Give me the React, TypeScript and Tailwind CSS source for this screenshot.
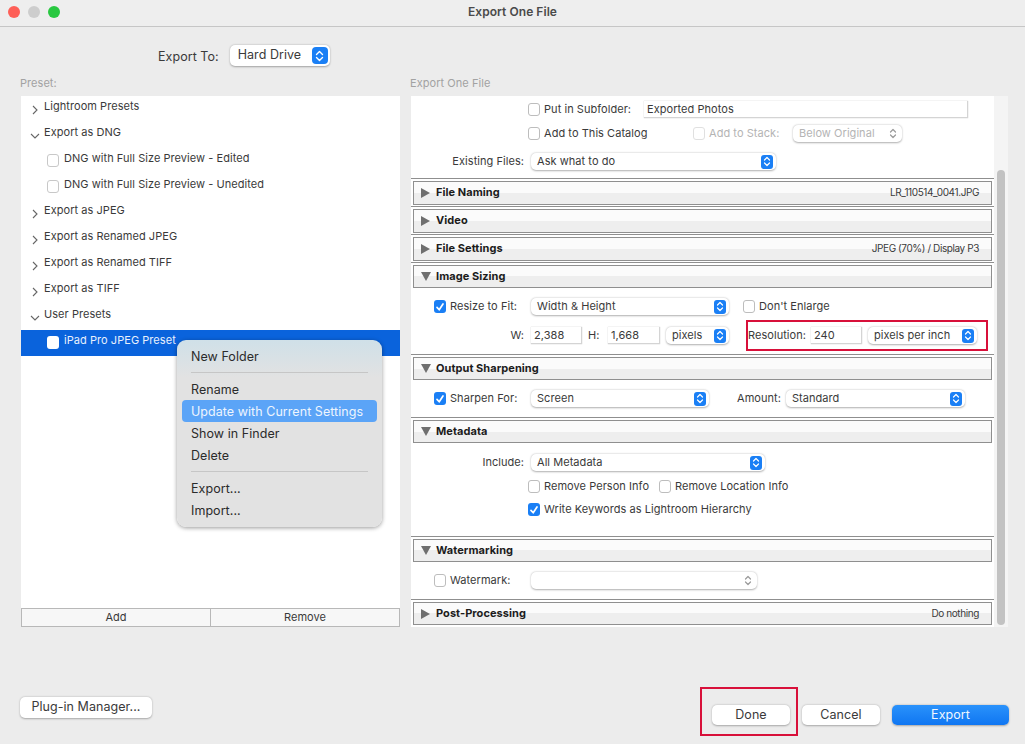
import type { ReactNode } from 'react'

const font = { fontFamily: 'Inter, "Noto Sans", sans-serif' }

function Stepper({ muted }: { muted?: boolean }) {
  return (
    <span className={muted ? 'flex h-[15px] w-[12px] items-center justify-center' : 'flex h-[14px] w-[12px] items-center justify-center rounded-[3px] bg-[#1a7ff5]'}>
      <svg width="8" height="11" viewBox="0 0 8 11" fill="none" stroke={muted ? '#9a9a9a' : '#fff'} strokeWidth="1.2" strokeLinecap="round" strokeLinejoin="round">
        <path d="M1.5 4 4 1.5 6.5 4" />
        <path d="M1.5 7 4 9.5 6.5 7" />
      </svg>
    </span>
  )
}

function Select({ label, className, muted }: { label?: string; className: string; muted?: boolean }) {
  return (
    <div className={`flex h-[17px] shrink-0 items-center justify-between rounded-[5px] bg-white pl-[6px] pr-[3px] text-[11px] shadow-[0_0.5px_2px_rgba(0,0,0,0.32)] ${muted ? 'text-[#b4b4b4]' : 'text-[#3a3a3a]'} ${className}`}>
      <span>{label}</span>
      <Stepper muted={muted} />
    </div>
  )
}

function Input({ value, className }: { value: string; className: string }) {
  return (
    <div className={`flex h-[17px] shrink-0 items-center border-b border-r border-[#d4d4d4] bg-white pl-[3px] text-[11px] text-[#3a3a3a] shadow-[0_0_1px_rgba(0,0,0,0.25)] ${className}`}>
      {value}
    </div>
  )
}

function Check({ checked, faded, className = '' }: { checked?: boolean; faded?: boolean; className?: string }) {
  if (checked) {
    return (
      <span className={`flex h-[13px] w-[12px] shrink-0 items-center justify-center rounded-[3px] bg-[#1a7ff5] ${className}`}>
        <svg width="10" height="10" viewBox="0 0 10 10" fill="none" stroke="#fff" strokeWidth="1.7" strokeLinecap="round" strokeLinejoin="round">
          <path d="M2 5.4 4.2 7.8 8 2" />
        </svg>
      </span>
    )
  }
  return <span className={`h-[13px] w-[12px] shrink-0 rounded-[3px] border bg-white ${faded ? 'border-[#e0e0e0]' : 'border-[#bdbdbd]'} ${className}`} />
}

function Section({ title, open, right, collapsedTall = true, children }: { title: string; open?: boolean; right?: string; collapsedTall?: boolean; children?: ReactNode }) {
  return (
    <div className="border-t border-[#8f8f8f] pt-[2px]">
      <div className={`mx-[2px] flex items-center justify-between border border-[#8f8f8f] bg-[linear-gradient(#fbfbfb_50%,#eeeeee_50%)] pl-[7px] pr-[12px] ${collapsedTall && !open ? 'h-[24px] pb-[1px]' : 'h-[23px]'}`}>
        <div className="flex items-center">
          {open ? (
            <svg width="10" height="9" viewBox="0 0 10 9" className="mr-[5px]"><path d="M0 0h10L5 9z" fill="#6f6f6f" /></svg>
          ) : (
            <svg width="9" height="10" viewBox="0 0 9 10" className="mr-[6px]"><path d="M0 0l9 5-9 5z" fill="#6f6f6f" /></svg>
          )}
          <span className="text-[11px] font-bold text-[#1c1c1c]">{title}</span>
        </div>
        {right && <span className="text-[10px] tracking-[-0.4px] text-[#3a3a3a]">{right}</span>}
      </div>
      <div className="h-px" />
      {children}
    </div>
  )
}

function Tree({ label, open }: { label: string; open?: boolean }) {
  return (
    <div className="flex h-[26px] items-start pt-[2px] text-[11px] text-[#3a3a3a]">
      <span className="flex h-[18px] w-[23px] shrink-0 items-center justify-end pr-[4px]">
        {open ? (
          <svg width="10" height="6" viewBox="0 0 10 6" fill="none" stroke="#666" strokeWidth="1.1" className="mt-[6px]"><path d="M1 1l4 4 4-4" /></svg>
        ) : (
          <svg width="6" height="10" viewBox="0 0 6 10" fill="none" stroke="#666" strokeWidth="1.1" className="mt-[5px] mr-[2px]"><path d="M1 1l4 4-4 4" /></svg>
        )}
      </span>
      {label}
    </div>
  )
}

function Preset({ label, selected }: { label: string; selected?: boolean }) {
  return (
    <div className={`flex h-[26px] items-start pl-[26px] pt-[2px] text-[11px] ${selected ? 'bg-[#0a63dc] text-[#e8f0fc]' : 'text-[#3a3a3a]'}`}>
      <span className={`mt-[4px] mr-[5px] h-[13px] w-[12px] shrink-0 rounded-[3px] ${selected ? 'bg-white' : 'border border-[#c8c8c8] bg-white'}`} />
      {label}
    </div>
  )
}

function MenuItem({ label, active }: { label: string; active?: boolean }) {
  return (
    <div className={`flex h-[22px] items-center whitespace-nowrap rounded-[4px] px-[9px] pt-[2px] text-[12.5px] ${active ? 'bg-[#5ba4f7] text-[#eef5fe]' : 'text-[#2b2b2b]'}`}>
      {label}
    </div>
  )
}

function MacButton({ label, className }: { label: string; className: string }) {
  return (
    <button className={`flex h-[20px] items-center justify-center rounded-[5px] text-[12.5px] shadow-[0_0.5px_2px_rgba(0,0,0,0.3)] ${className}`}>
      {label}
    </button>
  )
}

export default function App() {
  return (
    <div style={font} className="relative flex h-[744px] w-[1025px] flex-col overflow-hidden bg-[#ececec] tracking-[0.05px]">
      <div className="relative flex h-[27px] shrink-0 items-center justify-center border-b border-[#c6c6c6] bg-[#eeeeee]">
        <div className="absolute left-[8px] top-[6px] flex gap-[8px]">
          <span className="h-[12px] w-[12px] rounded-full bg-[#fe5f57]" />
          <span className="h-[12px] w-[12px] rounded-full bg-[#cdcdcd]" />
          <span className="h-[12px] w-[12px] rounded-full bg-[#28c840]" />
        </div>
        <span className="mb-[3px] text-[12px] font-semibold text-[#4a4a4a]">Export One File</span>
      </div>

      <div className="mt-[17px] flex h-[23px] shrink-0 items-center pl-[158px]">
        <span className="mt-[4px] mr-[11px] text-[12.5px] text-[#3a3a3a]">Export To:</span>
        <div className="flex h-[21px] w-[100px] items-center justify-between rounded-[5px] bg-white pl-[8px] pr-[2px] text-[12.5px] text-[#3a3a3a] shadow-[0_0.5px_2px_rgba(0,0,0,0.32)]">
          Hard Drive
          <span className="flex h-[17px] w-[16px] items-center justify-center rounded-[4px] bg-[#1a7ff5]">
            <svg width="9" height="12" viewBox="0 0 9 12" fill="none" stroke="#fff" strokeWidth="1.4" strokeLinecap="round" strokeLinejoin="round">
              <path d="M1.5 4.5 4.5 1.5 7.5 4.5" />
              <path d="M1.5 7.5 4.5 10.5 7.5 7.5" />
            </svg>
          </span>
        </div>
      </div>

      <div className="mt-[9px] flex h-[14px] shrink-0 items-center text-[11px] text-[#a2a2a2]">
        <span className="ml-[20px] w-[390px]">Preset:</span>
        <span>Export One File</span>
      </div>

      <div className="mt-[6px] flex h-[531px] shrink-0 pl-[21px]">
        <div className="relative flex w-[379px] flex-col bg-white">
          <div className="flex-1">
            <Tree label="Lightroom Presets" />
            <Tree label="Export as DNG" open />
            <Preset label="DNG with Full Size Preview - Edited" />
            <Preset label="DNG with Full Size Preview - Unedited" />
            <Tree label="Export as JPEG" />
            <Tree label="Export as Renamed JPEG" />
            <Tree label="Export as Renamed TIFF" />
            <Tree label="Export as TIFF" />
            <Tree label="User Presets" open />
            <Preset label="iPad Pro JPEG Preset" selected />
          </div>
          <div className="flex h-[19px] shrink-0 border border-[#b8b8b8] bg-[#f7f7f7] text-[11px] text-[#3a3a3a]">
            <div className="flex w-[189px] items-center justify-center border-r border-[#b8b8b8]">Add</div>
            <div className="flex flex-1 items-center justify-center">Remove</div>
          </div>

          <div className="absolute left-[156px] top-[244px] w-[205px] rounded-[9px] bg-[linear-gradient(#cfe0e8,#e2e2e2_38px,#e2e2e2)] px-[5px] pt-[5px] shadow-[0_1px_4px_rgba(0,0,0,0.4)]">
            <MenuItem label="New Folder" />
            <div className="mx-[9px] my-[5px] h-px bg-[#c6c6c6]" />
            <MenuItem label="Rename" />
            <MenuItem label="Update with Current Settings" active />
            <MenuItem label="Show in Finder" />
            <MenuItem label="Delete" />
            <div className="mx-[9px] my-[5px] h-px bg-[#c6c6c6]" />
            <MenuItem label="Export..." />
            <MenuItem label="Import..." />
            <div className="h-[6px]" />
          </div>
        </div>

        <div className="ml-[11px] flex w-[597px] bg-white">
          <div className="flex w-[583px] flex-col">
            <div className="h-[82px] shrink-0 text-[11px] text-[#3a3a3a]">
              <div className="mt-[5px] flex h-[17px] items-center pl-[117px]">
                <Check className="mr-[4px]" />
                <span className="w-[100px]">Put in Subfolder:</span>
                <Input value="Exported Photos" className="w-[324px]" />
              </div>
              <div className="mt-[7px] flex h-[17px] items-center pl-[117px]">
                <Check className="mr-[4px]" />
                <span className="w-[149px]">Add to This Catalog</span>
                <Check faded className="mr-[4px]" />
                <span className="w-[84px] text-[#b4b4b4]">Add to Stack:</span>
                <Select label="Below Original" muted className="w-[109px]" />
              </div>
              <div className="mt-[11px] flex h-[17px] items-center">
                <span className="w-[113px] text-right">Existing Files:</span>
                <Select label="Ask what to do" className="ml-[7px] w-[245px]" />
              </div>
            </div>

            <Section title="File Naming" right="LR_110514_0041.JPG" />
            <Section title="Video" />
            <Section title="File Settings" right="JPEG (70%) / Display P3" />

            <Section title="Image Sizing" open>
              <div className="flex h-[65px] flex-col text-[11px] text-[#3a3a3a]">
                <div className="mt-[9px] flex h-[17px] items-center pl-[23px]">
                  <Check checked className="mr-[4px]" />
                  <span className="w-[81px]">Resize to Fit:</span>
                  <Select label="Width & Height" className="w-[198px]" />
                  <Check className="ml-[14px] mr-[4px]" />
                  <span>Don't Enlarge</span>
                </div>
                <div className="mt-[12px] flex h-[17px] items-center">
                  <span className="w-[113px] text-right">W:</span>
                  <Input value="2,388" className="ml-[7px] w-[51px]" />
                  <span className="ml-[6px] w-[20px]">H:</span>
                  <Input value="1,668" className="w-[52px]" />
                  <Select label="pixels" className="ml-[6px] w-[63px]" />
                  <span className="ml-[19px] w-[63px]">Resolution:</span>
                  <Input value="240" className="w-[51px]" />
                  <Select label="pixels per inch" className="ml-[6px] w-[109px]" />
                </div>
              </div>
            </Section>

            <Section title="Output Sharpening" open>
              <div className="flex h-[36px] flex-col text-[11px] text-[#3a3a3a]">
                <div className="mt-[9px] flex h-[17px] items-center pl-[23px]">
                  <Check checked className="mr-[4px]" />
                  <span className="w-[81px]">Sharpen For:</span>
                  <Select label="Screen" className="w-[178px]" />
                  <span className="ml-[28px] w-[49px]">Amount:</span>
                  <Select label="Standard" className="w-[179px]" />
                </div>
              </div>
            </Section>

            <Section title="Metadata" open>
              <div className="flex h-[92px] flex-col text-[11px] text-[#3a3a3a]">
                <div className="mt-[10px] flex h-[17px] items-center">
                  <span className="w-[113px] text-right">Include:</span>
                  <Select label="All Metadata" className="ml-[7px] w-[234px]" />
                </div>
                <div className="mt-[7px] flex h-[17px] items-center pl-[117px]">
                  <Check className="mr-[4px]" />
                  <span className="w-[115px]">Remove Person Info</span>
                  <Check className="mr-[4px]" />
                  <span>Remove Location Info</span>
                </div>
                <div className="mt-[6px] flex h-[17px] items-center pl-[117px]">
                  <Check checked className="mr-[4px]" />
                  <span>Write Keywords as Lightroom Hierarchy</span>
                </div>
              </div>
            </Section>

            <Section title="Watermarking" open>
              <div className="flex h-[36px] flex-col text-[11px] text-[#3a3a3a]">
                <div className="mt-[9px] flex h-[17px] items-center pl-[23px]">
                  <Check className="mr-[4px]" />
                  <span className="w-[81px]">Watermark:</span>
                  <Select className="w-[226px]" muted />
                </div>
              </div>
            </Section>

            <Section title="Post-Processing" right="Do nothing" collapsedTall={false} />
          </div>

          <div className="flex-1 bg-[#f4f4f4] px-[3px] pt-[74px] pb-[2px]">
            <div className="h-full w-[8px] rounded-full bg-[#c2c2c2]" />
          </div>
        </div>
      </div>

      <div className="mt-[70px] flex shrink-0 items-start">
        <MacButton label="Plug-in Manager..." className="ml-[20px] h-[21px] w-[132px] bg-white text-[#3a3a3a]" />
        <MacButton label="Done" className="ml-[560px] mt-[8px] w-[78px] bg-white text-[#3a3a3a]" />
        <MacButton label="Cancel" className="ml-[12px] mt-[8px] w-[78px] bg-white text-[#3a3a3a]" />
        <MacButton label="Export" className="ml-[12px] mt-[8px] w-[117px] bg-[linear-gradient(#2a92fb,#0f76f2)] text-[#f0f7ff]" />
      </div>

      <div className="absolute left-[746px] top-[320px] h-[31px] w-[242px] border-2 border-[#d8103a]" />
      <div className="absolute left-[700px] top-[687px] h-[49px] w-[98px] border-2 border-[#d8103a]" />
    </div>
  )
}
